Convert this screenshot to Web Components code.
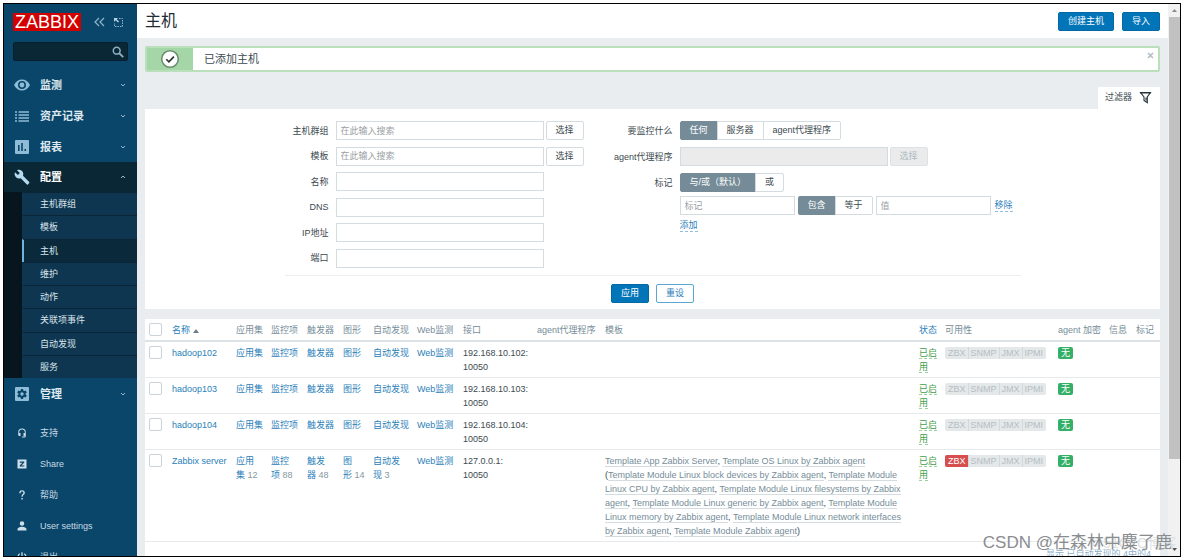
<!DOCTYPE html>
<html lang="zh-CN">
<head>
<meta charset="utf-8">
<title>主机</title>
<style>
  html, body { height: 100%; }
  body { margin: 0; padding: 3px; box-sizing: border-box; background: #fff; overflow: hidden;
    font: 9px/14px "Liberation Sans", "Noto Sans CJK SC", sans-serif; color: #3c4a50; }
</style>
</head>
<body>
<zbx-app>
  <zbx-sidebar slot="side"></zbx-sidebar>
  <zbx-header heading="主机">
    <zbx-button kind="primary">创建主机</zbx-button>
    <zbx-button kind="primary">导入</zbx-button>
  </zbx-header>
  <zbx-message>已添加主机</zbx-message>
  <zbx-filter></zbx-filter>
  <zbx-hosts></zbx-hosts>
  <zbx-scrollbar slot="scroll"></zbx-scrollbar>
  <span slot="mark">CSDN @在森林中麋了鹿</span>
  <span slot="faint">@51CTO博客</span>
</zbx-app>

<script>
const reset = `:host, *, *::before, *::after { box-sizing: border-box; }
  button, input { font: inherit; color: inherit; margin: 0; }
  a { color: #2a80b9; text-decoration: none; }
  svg { display: block; }`;

function define(name, render) {
  customElements.define(name, class extends HTMLElement {
    connectedCallback() {
      if (this.shadowRoot) return;
      const root = this.attachShadow({ mode: 'open' });
      const t = document.createElement('template');
      const { css, html } = render(this);
      t.innerHTML = `<style>${reset}${css}</style>${html}`;
      root.append(t.content.cloneNode(true));
    }
  });
}

define('zbx-app', () => ({
  css: `:host { display: grid; grid-template-columns: 133px minmax(0, 1fr) 12px; grid-template-rows: minmax(0, 1fr); height: 100%;
      border: 1px solid #000; overflow: hidden; position: relative; background: #e9edf0; }
    ::slotted([slot=side]), main { min-height: 0; overflow: hidden; }
    .mark, .faint { position: absolute; white-space: nowrap; pointer-events: none; }
    .mark { right: 8px; bottom: 1px; font-size: 17px; line-height: 24px; color: #8a8d90; }
    .faint { right: 4px; bottom: 4px; font-size: 14px; line-height: 18px; color: #dcdfe1; }`,
  html: `<slot name="side"></slot><main><slot></slot></main><slot name="scroll"></slot>
    <div class="faint"><slot name="faint"></slot></div><div class="mark"><slot name="mark"></slot></div>`
}));

define('zbx-button', el => ({
  css: `:host { display: inline-flex; }
    button { height: 19px; padding: 0 9px; border: 1px solid #d3dce0; border-radius: 2px; background: #fff;
      line-height: 17px; white-space: nowrap; color: #3c4a50; }
    .primary { background: #0275b8; border-color: #0269a5; color: #fff; }
    .outline { border-color: #5aa7d6; color: #2a80b9; }
    button:disabled { background: #ebebeb; border-color: #dce2e5; color: #acbbc2; }`,
  html: `<button type="button" class="${el.getAttribute('kind') || ''}" ${el.hasAttribute('disabled') ? 'disabled' : ''}><slot></slot></button>`
}));

define('zbx-header', el => ({
  css: `:host { display: flex; align-items: center; justify-content: space-between; height: 34px; padding: 0 8px; background: #fff; }
    h1 { margin: 0; font-size: 16px; line-height: 24px; font-weight: 400; color: #1f2c33; }
    div { display: flex; gap: 8px; }`,
  html: `<h1>${el.getAttribute('heading')}</h1><div><slot></slot></div>`
}));

define('zbx-message', () => ({
  css: `:host { display: flex; align-items: stretch; height: 26px; margin: 8px 8px 15px; background: #fff; border: 2px solid #b9e0bb; border-radius: 2px; }
    .tick { width: 46px; background: #a5d6a7; display: grid; place-items: center; }
    output { flex: 1; padding: 0 11px; font-size: 11px; line-height: 22px; }
    button { align-self: flex-start; border: 0; background: none; padding: 4px; }`,
  html: `<span class="tick"><svg width="20" height="20" viewBox="0 0 20 20"><circle cx="10" cy="10" r="8.3" fill="#fff" stroke="#6d8f70" stroke-width="1.6"/><path d="M6.3 10.2l2.6 2.6 5-5.2" fill="none" stroke="#28332a" stroke-width="1.6"/></svg></span>
    <output><slot></slot></output>
    <button type="button" aria-label="关闭"><svg width="7" height="7" viewBox="0 0 7 7"><path d="M1 1l5 5M6 1L1 6" stroke="#b3bfc5" stroke-width="1.7"/></svg></button>`
}));

const chevron = up => `<svg class="chev" width="6" height="4" viewBox="0 0 6 4"><path d="${up ? 'M1 3l2-2 2 2' : 'M1 1l2 2 2-2'}" fill="none" stroke="#9db8c9" stroke-width="1"/></svg>`;

const icons = {
  eye: '<path fill-rule="evenodd" d="M0 8C2 4 5 2.4 8 2.4S14 4 16 8c-2 4-5 5.6-8 5.6S2 12 0 8zm8-4a4 4 0 100 8 4 4 0 000-8zm0 1.6a2.4 2.4 0 110 4.8 2.4 2.4 0 010-4.8z"/>',
  list: '<path d="M1 3.3h2v1.4H1zM4.5 3.3H15v1.4H4.5zM1 6.3h2v1.4H1zM4.5 6.3H15v1.4H4.5zM1 9.300h2v1.400H1zM4.500 9.300H15v1.400H4.500zM1 12.3h2v1.400H1zM4.500 12.300H15v1.400H4.500z"/>',
  chart: '<path fill-rule="evenodd" d="M2 1h12a1 1 0 011 1v12a1 1 0 01-1 1H2a1 1 0 01-1-1V2a1 1 0 011-1zm2 5v6h1.600V6zm3.200-2v8h1.600V4zm3.300 6v2H12v-2z"/>',
  wrench: '<path d="M15.200 13L9 6.800c.6-1.600.3-3.400-1-4.700C6.600.7 4.600.4 3 1.200L5.800 4 3.900 6 1 3.200c-.8 1.600-.4 3.600 1 5 1.300 1.300 3.100 1.600 4.700 1l6.200 6.200c.3.3.7.3 1 0l1.300-1.400c.3-.3.300-.7 0-1z"/>',
  gear: '<path fill-rule="evenodd" d="M2 1h12a1 1 0 011 1v12a1 1 0 01-1 1H2a1 1 0 01-1-1V2a1 1 0 011-1zm5 2l-.3 1.500-1 .5-1.400-.5-1.100 1.900 1.200 1v1.200l-1.200 1 1.100 1.900 1.400-.5 1 .5L7 13h2l.3-1.500 1-.5 1.400.5 1.100-1.900-1.200-1V7.400l1.200-1-1.100-1.900-1.400.5-1-.5L9 3zm1 3.300a1.700 1.700 0 110 3.400 1.700 1.700 0 010-3.400z"/>',
  support: '<path d="M8 2a5 5 0 00-5 5v3.500A1.500 1.500 0 004.500 12H6V8H4.300V7a3.700 3.700 0 017.400 0v1H10v4h1.700v.7H8V14h3.500A1.500 1.500 0 0013 12.500V7a5 5 0 00-5-5z"/>',
  share: '<path fill-rule="evenodd" d="M2 2h12v12H2zM5 4.800v1.400h3.500L4.900 10v1.300h6.200V9.900H7.400L11 6V4.800z"/>',
  help: '<path d="M4.300 5.500C4.300 3.200 5.700 1.700 8 1.700s3.800 1.300 3.800 3.400c0 2.600-2.900 2.900-2.900 5.100H7.200c0-3.100 2.700-3.300 2.700-5.100C9.900 4 9.200 3.400 8 3.400s-1.900.7-1.900 2.100zM7.100 12H9v2H7.100z"/>',
  user: '<path d="M8 1.800a3 3 0 110 6 3 3 0 010-6zM2 14v-1.500C2 10.200 5.800 9.100 8 9.100s6 1.100 6 3.400V14z"/>',
  power: '<path d="M8 1.500v7M5 3.600a5.300 5.300 0 106 0" fill="none" stroke="#cddfe9" stroke-width="1.700"/>'
};

define('zbx-nav-item', el => ({
  css: `:host { display: block; }
    a { display: flex; align-items: center; height: 31px; padding: 0 11px 0 9px; color: #dfe9ef; font-size: 11px; font-weight: 700; }
    svg.icon { width: 18px; fill: #8ebcd6; margin-right: 9px; }
    span { flex: 1; }
    :host([active]) a { background: #0a2736; color: #fff; height: 30px; }
    :host([active]) .icon { fill: #b5d9ee; }
    :host([small]) a { font-size: 9px; font-weight: 400; color: #c8dae4; }
    :host([small]) .icon { fill: #cddfe9; }`,
  html: `<a href="#"><svg class="icon" height="${el.hasAttribute('small') ? 12 : 16}" viewBox="0 0 16 16">${icons[el.getAttribute('icon')]}</svg>
    <span><slot></slot></span>${el.hasAttribute('small') ? '' : chevron(el.hasAttribute('active'))}</a>`
}));

define('zbx-sidebar', () => ({
  css: `:host { display: block; background: #0a466a; }
    .top { display: flex; align-items: center; padding: 9px 13px 0 9px; }
    .logo { background: #d40000; color: #fff; font-size: 18px; line-height: 18px; width: 69px; text-align: center; margin-right: 13px; }
    .top button { border: 0; padding: 0; background: none; margin-right: 8px; }
    .top button:last-child { margin: 0; }
    .search { display: flex; align-items: center; margin: 11px 9px 8px; height: 19px; background: #0a2736; border: 1px solid #08202d; border-radius: 2px; padding-right: 3px; }
    .search input { flex: 1; min-width: 0; border: 0; background: none; color: #fff; outline: 0; }
    ul { list-style: none; margin: 0; padding: 0 0 0 18px; display: grid; grid-auto-rows: 1fr; height: 186px; background: #06151e; }
    li { display: flex; border-top: 1px solid #0a2535; background: #0f3650; border-left: 2px solid #0f3650; }
    li a { flex: 1; padding-left: 16px; align-self: center; color: #d8e4eb; }
    li.on { background: #0a2a3c; border-left-color: #6fb4dc; }
    .foot { margin-top: 8px; }`,
  html: `<div class="top"><div class="logo">ZABBIX</div>
      <button type="button" aria-label="收起"><svg width="11" height="10" viewBox="0 0 11 10"><path d="M5 1L1 5l4 4M10 1L6 5l4 4" fill="none" stroke="#8fb5cb" stroke-width="1.200"/></svg></button>
      <button type="button" aria-label="隐藏"><svg width="11" height="11" viewBox="0 0 11 11"><path d="M6 1.500h3.500v8h-8V6" fill="none" stroke="#8fb5cb" stroke-dasharray="1.500 1"/><path d="M1 1h4L3.700 2.300 6 4.600l-1 1-2.500-2.300L1 5z" fill="#b8d3e2"/></svg></button></div>
    <div class="search"><input type="text" aria-label="搜索"><svg width="12" height="12" viewBox="0 0 12 12"><circle cx="4.700" cy="4.700" r="3.400" fill="none" stroke="#8fb0c2" stroke-width="1.500"/><path d="M7.200 7.200l4 4" stroke="#8fb0c2" stroke-width="1.900"/></svg></div>
    <nav>
      <zbx-nav-item icon="eye">监测</zbx-nav-item>
      <zbx-nav-item icon="list">资产记录</zbx-nav-item>
      <zbx-nav-item icon="chart">报表</zbx-nav-item>
      <zbx-nav-item icon="wrench" active>配置</zbx-nav-item>
      <ul>${['主机群组', '模板', '主机', '维护', '动作', '关联项事件', '自动发现', '服务'].map(s => `<li${s === '主机' ? ' class="on"' : ''}><a href="#">${s}</a></li>`).join('')}</ul>
      <zbx-nav-item icon="gear">管理</zbx-nav-item>
    </nav>
    <div class="foot">
      <zbx-nav-item small icon="support">支持</zbx-nav-item>
      <zbx-nav-item small icon="share">Share</zbx-nav-item>
      <zbx-nav-item small icon="help">帮助</zbx-nav-item>
      <zbx-nav-item small icon="user">User settings</zbx-nav-item>
      <zbx-nav-item small icon="power">退出</zbx-nav-item>
    </div>`
}));

define('zbx-segmented', el => {
  const opts = el.getAttribute('options').split('|');
  return {
    css: `:host { display: inline-flex; }
      fieldset { display: flex; border: 0; margin: 0; padding: 0; min-width: 0; }
      label { position: relative; height: 19px; line-height: 17px; padding: 0 9px; border: 1px solid #d3dce0; margin-left: -1px; background: #fff; white-space: nowrap; }
      label:first-child { margin-left: 0; border-radius: 2px 0 0 2px; }
      label:last-child { border-radius: 0 2px 2px 0; }
      label:has(:checked) { background: #758c98; border-color: #758c98; color: #fff; }
      input { position: absolute; inset: 0; opacity: 0; }`,
    html: `<fieldset aria-label="${el.getAttribute('name')}">${opts.map((o, i) => `<label><input type="radio" name="o" ${i ? '' : 'checked'}>${o}</label>`).join('')}</fieldset>`
  };
});

define('zbx-field', el => {
  const ph = el.getAttribute('placeholder') || '';
  const input = el.hasAttribute('custom') ? '' : `<input id="f" type="text" placeholder="${ph}" ${el.hasAttribute('disabled') ? 'disabled' : ''}>`;
  const tag = input ? 'label for="f"' : 'span class="label"';
  return {
    css: `:host { display: flex; align-items: center; }
      label, .label { width: var(--label, 44px); margin-right: 7px; text-align: right; white-space: nowrap; flex: none; }
      input { width: 208px; height: 19px; padding: 0 4px; border: 1px solid #d3dce0; background: #fff; margin-right: 2px; }
      input::placeholder { color: #9aa0a3; }
      input:disabled { background: #ebebeb; }`,
    html: `<${tag}>${el.getAttribute('label')}</${input ? 'label' : 'span'}>${input}<slot></slot>`
  };
});

define('zbx-filter', () => ({
  css: `:host { display: block; margin: 0 8px 10px; }
    .tab { display: flex; align-items: center; gap: 7px; width: 62px; height: 22px; margin-left: auto; padding: 0 7px 2px; border: 0; background: #fff; color: #3c4a50; }
    form { background: #fff; height: 200px; padding-top: 12px; }
    .cols { display: flex; width: 736px; margin: 0 auto; padding-bottom: 7px; border-bottom: 1px solid #eceff1; }
    .left { flex: 0 0 317px; height: 147px; display: grid; grid-auto-rows: 19px; align-content: space-between; }
    .right { --label: 71px; display: grid; grid-auto-rows: min-content; gap: 7px; align-content: start; }
    .tags { display: grid; gap: 4px; }
    .tags > div { display: flex; align-items: center; gap: 3px; margin-left: 78px; }
    .tags input { width: 115px; height: 19px; padding: 0 4px; border: 1px solid #d3dce0; }
    .tags input::placeholder { color: #9aa0a3; }
    .tags a { line-height: 12px; border-bottom: 1px dashed #8fbfdf; }
    .tags .remove { margin-left: 1px; }
    .actions { display: flex; justify-content: center; gap: 7px; padding-top: 8px; }`,
  html: `<a class="tab" href="#">过滤器<svg width="13" height="13" viewBox="0 0 13 13"><path d="M1.500 1.500h10L8.300 6v5.800L5 9.500V6zM1 2h11M7 6.500v3" fill="none" stroke="#26343b" stroke-width="1.100"/></svg></a>
    <form>
      <div class="cols"><div class="left">
        <zbx-field label="主机群组" placeholder="在此输入搜索"><zbx-button>选择</zbx-button></zbx-field>
        <zbx-field label="模板" placeholder="在此输入搜索"><zbx-button>选择</zbx-button></zbx-field>
        <zbx-field label="名称"></zbx-field><zbx-field label="DNS"></zbx-field>
        <zbx-field label="IP地址"></zbx-field><zbx-field label="端口"></zbx-field>
      </div><div class="right">
        <zbx-field custom label="要监控什么"><zbx-segmented name="要监控什么" options="任何|服务器|agent代理程序"></zbx-segmented></zbx-field>
        <zbx-field disabled label="agent代理程序"><zbx-button disabled>选择</zbx-button></zbx-field>
        <div class="tags">
          <zbx-field custom label="标记"><zbx-segmented name="标记" options="与/或（默认）|或"></zbx-segmented></zbx-field>
          <div><input type="text" aria-label="标记" placeholder="标记"><zbx-segmented name="运算符" options="包含|等于"></zbx-segmented><input type="text" aria-label="值" placeholder="值"><a class="remove" href="#">移除</a></div>
          <div><a href="#">添加</a></div>
        </div>
      </div></div>
      <div class="actions"><zbx-button kind="primary">应用</zbx-button><zbx-button kind="outline">重设</zbx-button></div>
    </form>`
}));

define('zbx-availability', () => ({
  css: `:host { display: inline-flex; vertical-align: top; margin-top: 1px; border-radius: 2px; overflow: hidden; background: #e5e8e9; color: #b3bec4; line-height: 12px; }
    span { padding: 0 2px; border-left: 1px solid #d3dadd; }
    span:first-of-type { border: 0; padding-left: 3px; }
    span:last-of-type { padding-right: 3px; }
    :host([down]) span:first-of-type { background: #d64e4e; color: #fff; }`,
  html: `<span>ZBX</span><span>SNMP</span><span>JMX</span><span>IPMI</span>`
}));

define('zbx-hosts', () => {
  const widths = [23, 64, 35, 36, 36, 30, 44, 46, 74, 68, 0, 26, 113, 51, 27, 28];
  const heads = ['应用集', '监控项', '触发器', '图形', '自动发现', 'Web监测'];
  const counts = ['12', '88', '48', '14', '3', ''];
  const lines = 'Template App Zabbix Server|, |Template OS Linux by Zabbix agent| (|Template Module Linux block devices by Zabbix agent|, |Template Module Linux CPU by Zabbix agent|, |Template Module Linux filesystems by Zabbix agent|, |Template Module Linux generic by Zabbix agent|, |Template Module Linux memory by Zabbix agent|, |Template Module Linux network interfaces by Zabbix agent|, |Template Module Zabbix agent|)'.split('|');
  const templates = lines.map((s, i) => i % 2 ? s : `<a class="tpl" href="#">${s}</a>`).join('');
  const row = (name, ip, own) => `<tr><td><input type="checkbox" aria-label="${name}"></td><td><a href="#">${name}</a></td>${heads.map((h, i) =>
    `<td><a href="#">${h}</a>${own && counts[i] ? '&nbsp;<small>' + counts[i] + '</small>' : ''}</td>`).join('')}
    <td>${ip}:<br>10050</td><td></td><td>${own ? templates : ''}</td><td><a class="on" href="#">已启用</a></td>
    <td><zbx-availability ${own ? 'down' : ''}></zbx-availability></td><td><span class="none">无</span></td><td></td><td></td></tr>`;
  return {
    css: `:host { display: block; margin: 0 8px; background: #fff; }
      table { width: 100%; table-layout: fixed; border-collapse: separate; border-spacing: 0; }
      th, td { text-align: left; vertical-align: top; padding: 4px 0 3px 4px; font-weight: 400; border-bottom: 1px solid #e6eaec; }
      td:nth-child(11) { padding-right: 13px; }
      th { color: #768d99; white-space: nowrap; border-bottom: 2px solid #dce2e5; }
      input { appearance: none; display: block; width: 13px; height: 13px; border: 1px solid #c9d3d8; border-radius: 2px; background: #fff; }
      small { font-size: inherit; color: #8797a0; }
      .tpl { color: #768d99; border-bottom: 1px solid #d5dce0; }
      .on { color: #429e47; border-bottom: 1px dashed #9fd0a2; }
      .none { display: inline-block; margin-top: 1px; vertical-align: top; padding: 0 3px; line-height: 12px; border-radius: 2px; background: #34af67; color: #fff; }
      .sort { display: inline-block; border: 3px solid transparent; border-top: 0; border-bottom: 4px solid #6b7f8a; margin-left: 3px; }
      p { margin: 0; padding: 5px 9px 0 0; text-align: right; white-space: nowrap; color: #8fb0c8; }`,
    html: `<table><colgroup>${widths.map(w => w ? `<col style="width:${w}px">` : '<col>').join('')}</colgroup>
      <thead><tr><th><input type="checkbox" aria-label="全选"></th><th><a href="#">名称<i class="sort"></i></a></th>${heads.map(h => `<th>${h}</th>`).join('')}
      <th>接口</th><th>agent代理程序</th><th>模板</th><th><a href="#">状态</a></th><th>可用性</th><th>agent 加密</th><th>信息</th><th>标记</th></tr></thead>
      <tbody>${row('hadoop102', '192.168.10.102')}${row('hadoop103', '192.168.10.103')}${row('hadoop104', '192.168.10.104')}${row('Zabbix server', '127.0.0.1', true)}</tbody></table>
      <p>显示 已自动发现的 4中的4</p>`
  };
});

define('zbx-scrollbar', () => ({
  css: `:host { display: flex; flex-direction: column; align-items: center; background: #f1f1f1; }
    .thumb { width: 11px; flex: 0 0 80%; background: #c1c1c1; margin-bottom: auto; }
    svg { margin: 5px 0; }`,
  html: `<svg width="5" height="3" viewBox="0 0 5 3"><path d="M0 3L2.500 0 5 3z" fill="#8b8b8b"/></svg><div class="thumb"></div><svg width="5" height="3" viewBox="0 0 5 3"><path d="M0 0h5L2.500 3z" fill="#505050"/></svg>`
}));
</script>
</body>
</html>
